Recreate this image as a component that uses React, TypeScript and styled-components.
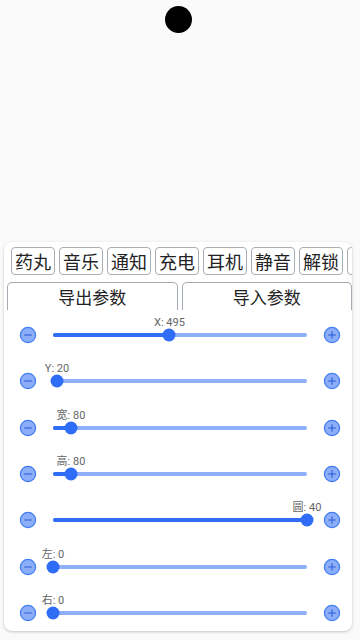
import React from 'react';
import styled, { createGlobalStyle } from 'styled-components';

const GlobalStyle = createGlobalStyle`
    html, body {
        margin: 0;
        padding: 0;
        background: #fafafa;
        font-family: "Noto Sans CJK SC", Roboto, "Noto Sans", sans-serif;
    }
`;

// last one is cut off by the card edge, only its border shows
const buttons = ['药丸', '音乐', '通知', '充电', '耳机', '静音', '解锁', ''];

const sliders = [
    { label: 'X', value: 495, max: 1080 },
    { label: 'Y', value: 20, max: 1270 },
    { label: '宽', value: 80, max: 1130 },
    { label: '高', value: 80, max: 1130 },
    { label: '圆', value: 40, max: 40 },
    { label: '左', value: 0, max: 100 },
    { label: '右', value: 0, max: 100 },
];

const Step = ({ plus }: { plus?: boolean }) => (
    <StepButton>
        <svg width="18" height="18" viewBox="0 0 18 18">
            <circle cx="9" cy="9" r="7.6" fill="#8cadf8" stroke="#3f7bf4" strokeWidth="1.2" />
            <line x1="5.2" y1="9" x2="12.8" y2="9" stroke="#2f5fd6" strokeWidth="1.1" />
            {plus && <line x1="9" y1="5.2" x2="9" y2="12.8" stroke="#2f5fd6" strokeWidth="1.1" />}
        </svg>
    </StepButton>
);

export default function App() {
    return (
        <Page>
            <GlobalStyle />
            <Dot />
            <Card>
                <ButtonRow>
                    {buttons.map((b, i) => (
                        <ModeButton key={i}>{b}</ModeButton>
                    ))}
                </ButtonRow>
                <TabRow>
                    <Tab>导出参数</Tab>
                    <Tab>导入参数</Tab>
                </TabRow>
                {sliders.map((s) => {
                    const pct = (s.value / s.max) * 100;
                    return (
                        <SliderRow key={s.label}>
                            <Step />
                            <Track>
                                <Active style={{ width: `${pct}%` }} />
                                <Thumb style={{ left: `${pct}%` }} />
                                <ValueLabel style={{ left: `${pct}%` }}>
                                    {s.label}: {s.value}
                                </ValueLabel>
                            </Track>
                            <Step plus />
                        </SliderRow>
                    );
                })}
            </Card>
        </Page>
    );
}

const Page = styled.div`
    width: 360px;
    height: 640px;
    display: flex;
    flex-direction: column;
    overflow: hidden;
`;

const Dot = styled.div`
    width: 27px;
    height: 27px;
    margin: 6px 0 0 165px;
    border-radius: 50%;
    background: #000;
`;

const Card = styled.div`
    margin: 209px 8px 0 4px;
    height: 389px;
    background: #fff;
    border-radius: 8px;
    box-shadow: 0 1px 3px rgba(0, 0, 0, 0.22);
    overflow: hidden;
`;

const ButtonRow = styled.div`
    display: flex;
    gap: 4px;
    padding: 5px 0 0 7px;
    overflow: hidden;
`;

const ModeButton = styled.div`
    flex-shrink: 0;
    width: 44px;
    height: 28px;
    box-sizing: border-box;
    border: 1px solid #a9aeb4;
    border-radius: 4px;
    display: flex;
    align-items: center;
    justify-content: center;
    font-size: 18px;
    color: #222;
    white-space: nowrap;
`;

const TabRow = styled.div`
    display: flex;
    gap: 4px;
    margin: 7px 0 2px;
    padding-left: 3px;
`;

const Tab = styled.div`
    flex: 1;
    height: 28px;
    box-sizing: border-box;
    border: 1px solid #a4abb2;
    border-bottom: none;
    border-radius: 5px 5px 0 0;
    display: flex;
    align-items: center;
    justify-content: center;
    font-size: 17px;
    color: #222;
`;

const SliderRow = styled.div`
    height: 46.33px;
    display: flex;
    align-items: center;
    padding-left: 15px;
    gap: 16px;
`;

const StepButton = styled.div`
    width: 18px;
    height: 18px;
    flex-shrink: 0;

    svg {
        display: block;
    }
`;

const Track = styled.div`
    position: relative;
    width: 254px;
    height: 4px;
    border-radius: 2px;
    background: #8eaff9;
`;

const Active = styled.div`
    height: 100%;
    border-radius: 2px;
    background: #2f6df6;
`;

const Thumb = styled.div`
    position: absolute;
    top: 50%;
    width: 13px;
    height: 13px;
    border-radius: 50%;
    background: #2f6df6;
    transform: translate(-50%, -50%);
`;

const ValueLabel = styled.span`
    position: absolute;
    bottom: 8px;
    transform: translateX(-50%);
    font-family: Roboto, "Noto Sans CJK SC", sans-serif;
    font-size: 11px;
    line-height: 12px;
    color: #666;
    white-space: nowrap;
`;
